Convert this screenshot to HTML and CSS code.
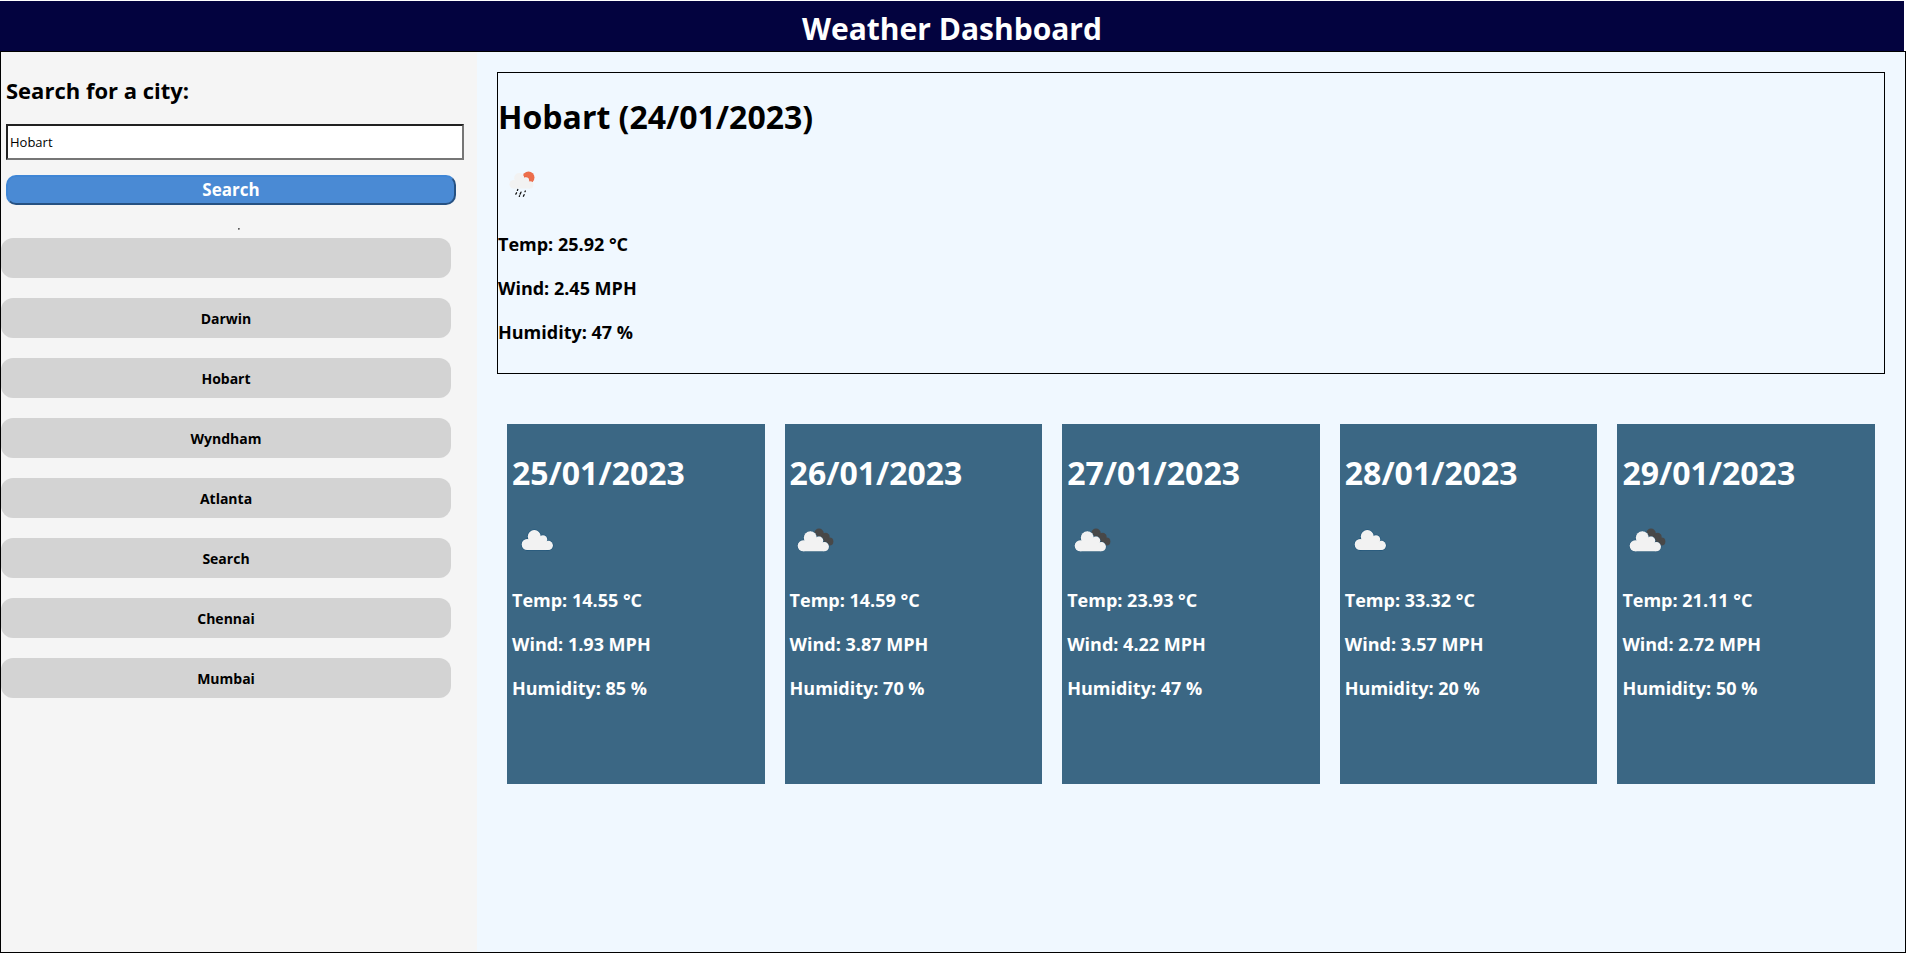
FILE: index.html
```html
<!DOCTYPE html>
<html lang="en">
<head>
<meta charset="utf-8">
<title>Weather Dashboard</title>
<link rel="stylesheet" href="styles.css">
</head>
<body>
<svg class="sprite" aria-hidden="true">
  <defs>
    <g id="cloud">
      <circle cx="15.200" cy="29.500" r="5.500"/>
      <circle cx="22.300" cy="21.500" r="6.500"/>
      <circle cx="31" cy="24.500" r="4.200"/>
      <circle cx="36.300" cy="30.400" r="4.600"/>
      <path d="M15 35V25l7-3 9 2 5 7v4z"/>
    </g>
    <symbol id="scattered" viewBox="0 0 50 50">
      <use href="#cloud" fill="#f2f2f2" stroke="#1c5378" stroke-width="1.200"/>
      <use href="#cloud" fill="#f2f2f2"/>
    </symbol>
    <symbol id="broken" viewBox="0 0 50 50">
      <g fill="#484848">
        <circle cx="29" cy="18.400" r="4.800"/>
        <circle cx="35.500" cy="22" r="4.200"/>
        <circle cx="39.500" cy="26.500" r="3.900"/>
        <path d="M27 22l8-3 5 7-2 4z"/>
      </g>
      <g transform="translate(-2 1.300)">
        <use href="#cloud" fill="#f2f2f2" stroke="#2b5a7a" stroke-width="1"/>
        <use href="#cloud" fill="#f2f2f2"/>
      </g>
    </symbol>
    <symbol id="rain" viewBox="0 0 50 50">
      <circle cx="30.500" cy="18.500" r="6" fill="#ec6e4c"/>
      <g transform="translate(4 2.500) scale(.77)">
        <use href="#cloud" fill="#f2f2f2" stroke="#e8502c" stroke-width="1" clip-path="url(#sun)"/>
        <use href="#cloud" fill="#f2f2f2"/>
      </g>
      <path stroke="#111" stroke-width="1.300" stroke-linecap="round" fill="none" d="M19.800 30.500l-.4.900M18.600 33.700l-.8 1.400M23 33.200l-.9 1.900M27.300 32l-.3.700M21.600 36.800l-.3.600M26.100 35.700l-.7 1.500"/>
    </symbol>
    <clipPath id="sun"><circle cx="34.400" cy="20.800" r="7.800"/></clipPath>
  </defs>
</svg>
<header class="banner"><h1 class="banner-title">Weather Dashboard</h1></header>
<div class="layout">
  <aside class="sidebar">
    <form class="search">
      <label class="search-label" for="city">Search for a city:</label>
      <input class="search-input" id="city" type="text" value="Hobart">
      <button class="search-button" type="button">Search</button>
    </form>
    <hr class="divider">
    <div class="history">
      <button class="history-item" type="button" aria-label="Empty entry"></button>
      <button class="history-item" type="button">Darwin</button>
      <button class="history-item" type="button">Hobart</button>
      <button class="history-item" type="button">Wyndham</button>
      <button class="history-item" type="button">Atlanta</button>
      <button class="history-item" type="button">Search</button>
      <button class="history-item" type="button">Chennai</button>
      <button class="history-item" type="button">Mumbai</button>
    </div>
  </aside>
  <main class="content">
    <section class="today">
      <h2 class="date">Hobart (24/01/2023)</h2>
      <svg class="icon" role="img" aria-label="Rain"><use href="#rain"/></svg>
      <p class="reading">Temp: 25.92 °C</p>
      <p class="reading">Wind: 2.45 MPH</p>
      <p class="reading">Humidity: 47 %</p>
    </section>
    <section class="forecast">
      <article class="card">
        <h2 class="date">25/01/2023</h2>
        <svg class="icon" role="img" aria-label="Scattered clouds"><use href="#scattered"/></svg>
        <p class="reading">Temp: 14.55 °C</p>
        <p class="reading">Wind: 1.93 MPH</p>
        <p class="reading">Humidity: 85 %</p>
      </article>
      <article class="card">
        <h2 class="date">26/01/2023</h2>
        <svg class="icon" role="img" aria-label="Broken clouds"><use href="#broken"/></svg>
        <p class="reading">Temp: 14.59 °C</p>
        <p class="reading">Wind: 3.87 MPH</p>
        <p class="reading">Humidity: 70 %</p>
      </article>
      <article class="card">
        <h2 class="date">27/01/2023</h2>
        <svg class="icon" role="img" aria-label="Broken clouds"><use href="#broken"/></svg>
        <p class="reading">Temp: 23.93 °C</p>
        <p class="reading">Wind: 4.22 MPH</p>
        <p class="reading">Humidity: 47 %</p>
      </article>
      <article class="card">
        <h2 class="date">28/01/2023</h2>
        <svg class="icon" role="img" aria-label="Scattered clouds"><use href="#scattered"/></svg>
        <p class="reading">Temp: 33.32 °C</p>
        <p class="reading">Wind: 3.57 MPH</p>
        <p class="reading">Humidity: 20 %</p>
      </article>
      <article class="card">
        <h2 class="date">29/01/2023</h2>
        <svg class="icon" role="img" aria-label="Broken clouds"><use href="#broken"/></svg>
        <p class="reading">Temp: 21.11 °C</p>
        <p class="reading">Wind: 2.72 MPH</p>
        <p class="reading">Humidity: 50 %</p>
      </article>
    </section>
  </main>
</div>
</body>
</html>
```
FILE: styles.css
```css
* {
  box-sizing: border-box;
}

body {
  display: flex;
  flex-direction: column;
  min-height: 100vh;
  margin: 0;
  padding: 1px 0 3px;
  background: #fff;
  color: #000;
  font-family: "Open Sans", "Noto Sans", sans-serif;
  font-weight: 700;
}

button,
input {
  font-family: inherit;
}

.sprite {
  position: absolute;
  width: 0;
  height: 0;
}

.banner {
  margin-right: 2px;
  padding: 6px 0 1px;
  background: #03033f;
  color: #fff;
  text-align: center;
}

.banner-title,
.date {
  margin: 0;
  font-size: 32px;
  font-weight: 700;
  line-height: 43px;
}

.banner-title {
  font-size: 30px;
}

.layout {
  display: flex;
  flex: 1;
  border: 1px solid #000;
  background: #f0f8ff;
}

.sidebar {
  flex: 0 0 25%;
  background: #f5f5f5;
}

.search {
  display: flex;
  flex-direction: column;
  padding: 22px 13px 0 5px;
}

.search-label {
  margin-bottom: 18px;
  font-size: 22px;
  font-weight: 700;
  line-height: 32px;
}

.search-input {
  height: 36px;
  padding: 1px 2px;
  border: 2px inset #767676;
  background: #fff;
  font-size: 13px;
}

.search-button {
  height: 30px;
  margin: 15px 8px 0 0;
  padding: 0;
  border: 2px outset #3f86d6;
  border-radius: 10px;
  background: #4a8ad4;
  color: #fff;
  font-size: 17px;
  font-weight: 700;
  line-height: 24px;
}

.divider {
  width: 2px;
  margin: 23px auto 8px;
  border: 1px inset #b0b0b0;
}

.history {
  display: flex;
  flex-direction: column;
  gap: 20px;
  padding-right: 26px;
}

.history-item {
  height: 40px;
  padding: 0;
  border: 0;
  border-radius: 12px;
  background: #d3d3d3;
  color: #000;
  font-size: 14px;
  font-weight: 700;
}

.content {
  flex: 1;
  padding: 20px;
}

.today {
  min-height: 302px;
  padding: 22px 0 9px;
  border: 1px solid #000;
}

.icon {
  display: block;
  width: 50px;
  height: 50px;
  margin: 21px 0 23px;
}

.reading {
  margin: 0 0 19px;
  font-size: 18px;
  font-weight: 700;
  line-height: 25px;
}

.forecast {
  display: grid;
  grid-template-columns: repeat(5, 1fr);
  gap: 20px;
  margin: 50px 10px 0;
}

.card {
  min-height: 360px;
  padding: 27px 5px 5px;
  background: #3b6784;
  color: #fff;
}
```
